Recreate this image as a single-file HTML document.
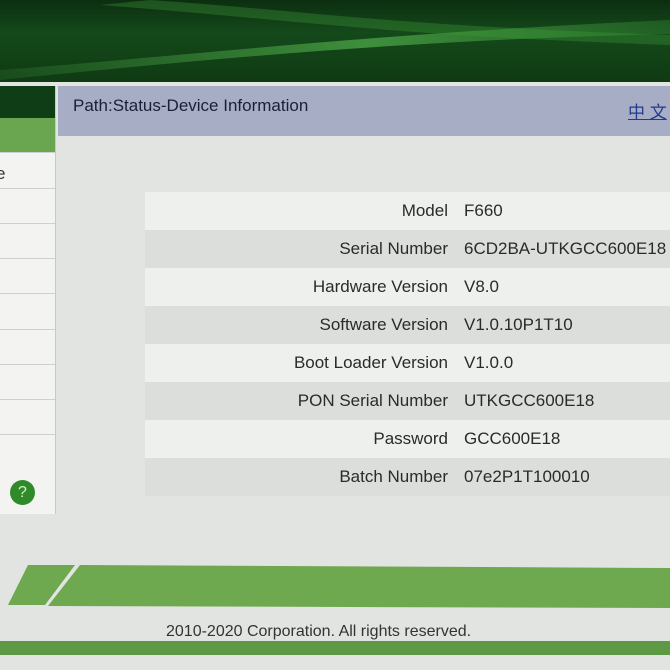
<!DOCTYPE html>
<html><head><style>
body{margin:0;width:670px;height:670px;overflow:hidden;background:#e2e4e1;font-family:"Liberation Sans","Noto Sans CJK SC",sans-serif;position:relative}
.a{position:absolute}
.hdr{left:0;top:0;width:670px;height:82px;background:linear-gradient(180deg,#0c2e10 0%,#14491a 40%,#0f3a13 100%)}
.side{left:0;top:86px;width:55px;height:428px;background:#f3f4f2;border-right:1px solid #c8c8c8}
.row{position:absolute;left:0;width:55px;border-bottom:1px solid #cfcfcf}
.path{left:58px;top:86px;width:612px;height:50px;background:#a8adc6;color:#1a1f3a;font-size:17px}
table{position:absolute;left:145px;top:192px;width:540px;border-collapse:collapse;font-size:17px;color:#2a2a2a}
td{height:38px;padding:0}
td.l{text-align:right;width:303px;padding-right:16px}
td.v{padding-left:0}
tr:nth-child(odd){background:#eef0ee}
tr:nth-child(even){background:#dcdedc}
</style></head><body>
<div class="a hdr"></div>
<svg class="a" style="left:0;top:0" width="670" height="82">
<defs><linearGradient id="g" x1="0" x2="1"><stop offset="0" stop-color="#4fae4a" stop-opacity=".15"/><stop offset=".55" stop-color="#5cc055" stop-opacity=".6"/><stop offset="1" stop-color="#3f9a3c" stop-opacity=".3"/></linearGradient></defs>
<path d="M0,70 C200,55 350,35 670,20 L670,34 C400,40 200,60 0,80 Z" fill="url(#g)"/>
<path d="M150,0 C300,10 380,25 670,35 L670,45 C380,35 300,20 100,5 Z" fill="#3e9a3a" opacity=".35"/>
</svg>
<div class="a side">
<div class="row" style="top:0;height:32px;background:#0f3d16"></div>
<div class="row" style="top:32px;height:34px;background:#6aa54f"></div>
<div class="a" style="left:-4px;top:78px;font-size:17px;color:#333">e</div>
<div class="row" style="top:66px;height:36px"></div>
<div class="row" style="top:102px;height:35px"></div>
<div class="row" style="top:137px;height:35px"></div>
<div class="row" style="top:172px;height:35px"></div>
<div class="row" style="top:207px;height:36px"></div>
<div class="row" style="top:243px;height:35px"></div>
<div class="row" style="top:278px;height:35px"></div>
<div class="row" style="top:313px;height:35px"></div>
<div class="a" style="left:10px;top:394px;width:25px;height:25px;border-radius:50%;background:#2f8a2a;color:#d8f0c8;font-size:16px;text-align:center;line-height:25px">?</div>
</div>
<div class="a path"><span class="a" style="left:15px;top:10px">Path:Status-Device Information</span><span class="a" style="left:570px;top:12px;text-decoration:underline;color:#223a8a">中 文</span></div>
<table>
<tr><td class="l">Model</td><td class="v">F660</td></tr>
<tr><td class="l">Serial Number</td><td class="v">6CD2BA-UTKGCC600E18</td></tr>
<tr><td class="l">Hardware Version</td><td class="v">V8.0</td></tr>
<tr><td class="l">Software Version</td><td class="v">V1.0.10P1T10</td></tr>
<tr><td class="l">Boot Loader Version</td><td class="v">V1.0.0</td></tr>
<tr><td class="l">PON Serial Number</td><td class="v">UTKGCC600E18</td></tr>
<tr><td class="l">Password</td><td class="v">GCC600E18</td></tr>
<tr><td class="l">Batch Number</td><td class="v">07e2P1T100010</td></tr>
</table>
<svg class="a" style="left:0;top:560px" width="670" height="50"><polygon points="28,5 75,5 45,45 8,45" fill="#6ea84f"/><polygon points="80,5 670,8 670,48 48,46" fill="#6ea84f"/></svg>
<div class="a" style="left:166px;top:623px;font-size:16px;color:#333">2010-2020 Corporation. All rights reserved.</div>
<div class="a" style="left:0;top:641px;width:670px;height:14px;background:#5e9a46"></div>
</body></html>
